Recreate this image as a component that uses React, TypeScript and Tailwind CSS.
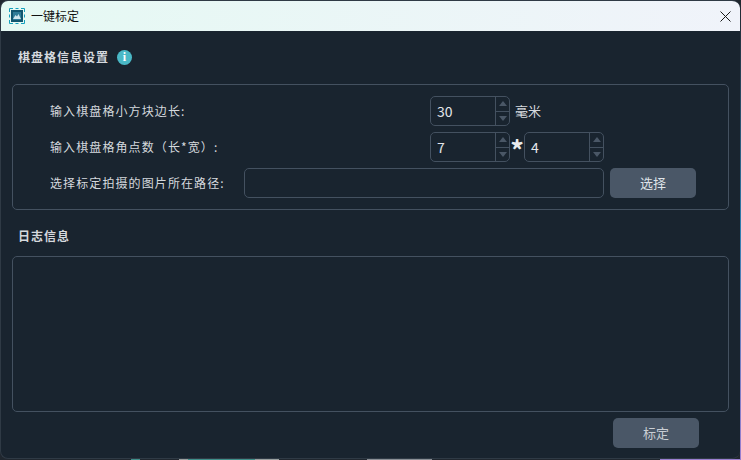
const font = { fontFamily: '"Noto Sans CJK SC", "Liberation Sans", sans-serif' };

function SpinBox({ value }: { value: string }) {
  return (
    <div className="flex h-[30px] w-[80px] rounded-[5px] border border-[#445160] bg-[#19242f]">
      <div className="flex flex-1 items-center pl-[6px] text-[14px] text-[#e3e6ea]">{value}</div>
      <div className="flex w-[14px] flex-col border-l border-[#445160]">
        <div className="flex flex-1 items-center justify-center border-b border-[#445160]">
          <svg width="8" height="5" viewBox="0 0 8 5"><path d="M0 5 L4 0 L8 5 Z" fill="#4a5766" /></svg>
        </div>
        <div className="flex flex-1 items-center justify-center">
          <svg width="8" height="5" viewBox="0 0 8 5"><path d="M0 0 L8 0 L4 5 Z" fill="#4a5766" /></svg>
        </div>
      </div>
    </div>
  );
}

export default function App() {
  return (
    <div className="flex h-[460px] w-[741px] flex-col overflow-hidden bg-[#20272f]" style={font}>
      <div className="flex h-[459px] shrink-0">
        <div className="flex h-[459px] w-[740px] shrink-0 flex-col overflow-hidden rounded-[8px] border-t border-b border-l border-[#2f3a45] bg-[#19242f]">
          <header className="flex h-[30px] shrink-0 items-center bg-gradient-to-r from-[#e5f9f3] to-[#f0f3fa] pl-[8px] pr-[9px]">
            <svg width="16" height="16" viewBox="0 0 16 16" className="shrink-0">
              <rect x="2" y="2" width="12" height="12" fill="#11566f" />
              <rect x="4" y="4" width="8" height="8" fill="#2f7d98" />
              <path d="M4 11 L6.5 7 L8 8.5 L9.5 6 L12 11 Z" fill="#cfe7ee" />
              <path d="M0.5 4V0.5H4M12 0.5H15.5V4M15.5 12V15.5H12M4 15.5H0.5V12" fill="none" stroke="#14a0bd" strokeWidth="1" />
              <path d="M6.5 0.5H9.5M6.5 15.5H9.5M0.5 6.5V9.5M15.5 6.5V9.5" stroke="#14a0bd" strokeWidth="1" />
            </svg>
            <span className="ml-[6px] text-[12px] text-[#111]">一键标定</span>
            <svg width="11" height="11" viewBox="0 0 11 11" className="ml-auto">
              <path d="M0.5 0.5 L10.5 10.5 M10.5 0.5 L0.5 10.5" stroke="#1a1a1a" strokeWidth="1" />
            </svg>
          </header>

          <main className="flex flex-1 flex-col pl-[11px]">
            <div className="flex h-[53px] items-center pl-[6px] pb-[1px]">
              <span className="text-[12px] font-bold tracking-[1px] text-[#d5d9de]">棋盘格信息设置</span>
              <span
                className="ml-[8px] flex h-[15px] w-[15px] items-center justify-center rounded-full bg-[#4ab8c6] text-[12px] font-bold leading-none text-white"
                style={{ fontFamily: '"Liberation Serif", serif' }}
              >
                i
              </span>
            </div>

            <section className="flex h-[126px] w-[717px] flex-col gap-[6px] rounded-[5px] border border-[#445160] pl-[37px] pt-[11px]">
              <div className="flex items-center">
                <span className="w-[380px] text-[12px] tracking-[1.1px] text-[#d5d9de]">输入棋盘格小方块边长:</span>
                <SpinBox value="30" />
                <span className="ml-[5px] text-[13px] text-[#d5d9de]">毫米</span>
              </div>
              <div className="flex items-center">
                <span className="w-[380px] text-[12px] tracking-[1.1px] text-[#d5d9de]">输入棋盘格角点数（长*宽）:</span>
                <SpinBox value="7" />
                <span className="h-[30px] w-[14px] text-center text-[27px] font-bold leading-[35px] text-[#e8ebee]">*</span>
                <SpinBox value="4" />
              </div>
              <div className="flex items-center">
                <span className="w-[194px] whitespace-nowrap text-[12px] tracking-[1.1px] text-[#d5d9de]">选择标定拍摄的图片所在路径:</span>
                <div className="h-[30px] w-[360px] rounded-[5px] border border-[#445160]" />
                <button className="ml-[6px] h-[30px] w-[86px] rounded-[5px] bg-[#4a5767] text-[13px] text-[#dfe3e8]">选择</button>
              </div>
            </section>

            <div className="flex h-[46px] items-center pl-[6px] pt-[6px]">
              <span className="text-[12px] font-bold tracking-[1px] text-[#d5d9de]">日志信息</span>
            </div>

            <section className="h-[156px] w-[717px] rounded-[5px] border border-[#445160]" />

            <div className="flex justify-end pr-[41px] pt-[6px]">
              <button className="h-[30px] w-[86px] rounded-[5px] bg-[#4a5767] text-[13px] text-[#c9ced4]">标定</button>
            </div>
          </main>
        </div>
        <div className="w-[1px] bg-gradient-to-b from-[#20272f] via-[#2f7fb0] to-[#9b7fd0]" />
      </div>
      <div className="flex h-[1px] shrink-0">
        <div className="w-[131px]" />
        <div className="w-[9px] bg-[#3f8f8a]" />
        <div className="w-[39px]" />
        <div className="w-[9px] bg-[#9aa0a0]" />
        <div className="w-[67px] bg-[#3f8f8a]" />
        <div className="w-[24px] bg-[#9aa0a0]" />
        <div className="w-[88px]" />
        <div className="w-[65px] bg-[#8b9096]" />
        <div className="w-[228px]" />
        <div className="w-[81px] bg-[#9b7fd0]" />
      </div>
    </div>
  );
}
